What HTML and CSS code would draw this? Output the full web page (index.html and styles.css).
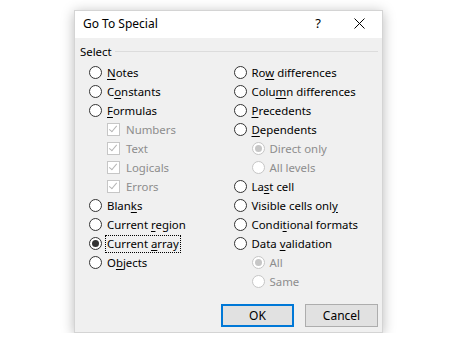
FILE: index.html
```html
<!DOCTYPE html>
<html lang="en">

<head>
  <meta charset="UTF-8">
  <title>Go To Special</title>
  <link rel="stylesheet" href="styles.css">
</head>

<body>
  <main>
    <section class="dialog">
      <header class="titlebar">
        <span class="title">Go To Special</span>
        <span class="help">?</span>
        <span class="close">
          <svg width="11" height="11" viewBox="0 0 11 11">
            <path d="M0.5 0.5 L10.5 10.5 M10.5 0.5 L0.5 10.5" stroke="#000" stroke-width="1" fill="none" />
          </svg>
        </span>
      </header>

      <div class="content">
        <div class="group-label"><span>Select</span></div>

        <div class="columns">
          <div class="column">
            <div class="row"><span class="radio"></span><span class="label"><u>N</u>otes</span></div>
            <div class="row"><span class="radio"></span><span class="label">C<u>o</u>nstants</span></div>
            <div class="row"><span class="radio"></span><span class="label"><u>F</u>ormulas</span></div>
            <div class="row sub disabled"><span class="check"></span><span class="label">Numbers</span></div>
            <div class="row sub disabled"><span class="check"></span><span class="label">Text</span></div>
            <div class="row sub disabled"><span class="check"></span><span class="label">Logicals</span></div>
            <div class="row sub disabled"><span class="check"></span><span class="label">Errors</span></div>
            <div class="row"><span class="radio"></span><span class="label">Blan<u>k</u>s</span></div>
            <div class="row"><span class="radio"></span><span class="label">Current <u>r</u>egion</span></div>
            <div class="row"><span class="radio checked"></span><span class="label focused">Current <u>a</u>rray</span></div>
            <div class="row"><span class="radio"></span><span class="label">O<u>b</u>jects</span></div>
          </div>

          <div class="column">
            <div class="row"><span class="radio"></span><span class="label">Ro<u>w</u> differences</span></div>
            <div class="row"><span class="radio"></span><span class="label">Colu<u>m</u>n differences</span></div>
            <div class="row"><span class="radio"></span><span class="label"><u>P</u>recedents</span></div>
            <div class="row"><span class="radio"></span><span class="label"><u>D</u>ependents</span></div>
            <div class="row sub disabled"><span class="radio checked"></span><span class="label">Direct only</span></div>
            <div class="row sub disabled"><span class="radio"></span><span class="label">All levels</span></div>
            <div class="row"><span class="radio"></span><span class="label">La<u>s</u>t cell</span></div>
            <div class="row"><span class="radio"></span><span class="label">Visible cells onl<u>y</u></span></div>
            <div class="row"><span class="radio"></span><span class="label">Condi<u>t</u>ional formats</span></div>
            <div class="row"><span class="radio"></span><span class="label">Data <u>v</u>alidation</span></div>
            <div class="row sub disabled"><span class="radio checked"></span><span class="label">All</span></div>
            <div class="row sub disabled"><span class="radio"></span><span class="label">Same</span></div>
          </div>
        </div>

        <footer class="buttons">
          <button class="btn default">OK</button>
          <button class="btn">Cancel</button>
        </footer>
      </div>
    </section>
  </main>
</body>

</html>
```

FILE: styles.css
```css
*,
*::before,
*::after {
  box-sizing: border-box;
  margin: 0;
  padding: 0;
}

:root {
  --dialog-bg: #f0f0f0;
  --text: #000;
  --text-disabled: #8d8d8d;
  --border-disabled: #c6c6c6;
  --accent: #0078d7;

  --ff-ui: "Noto Sans", "Open Sans", sans-serif;
}

body {
  background: #fff;
  font-family: var(--ff-ui);
  font-size: 11.4px;
  color: var(--text);
}

main {
  padding: 10px 0 0 74px;
}

.dialog {
  display: flex;
  flex-direction: column;

  width: 309px;
  height: 323px;

  background: var(--dialog-bg);
  border: 1px solid #d4d4d4;
  box-shadow: 0 2px 12px rgba(0, 0, 0, 0.28);
}

.titlebar {
  display: flex;
  align-items: center;

  height: 27px;
  padding-left: 8px;
  padding-bottom: 3px;

  background: #fff;
}

.title {
  flex: 1;
  font-size: 12px;
}

.help {
  width: 46px;
  text-align: center;
  font-size: 13px;
  margin-right: -4px;
}

.close {
  display: flex;
  align-items: center;
  justify-content: center;
  width: 45px;
}

.content {
  position: relative;
  flex: 1;
  padding: 5px 4px 0 5px;
}

.group-label {
  display: flex;
  align-items: center;
  gap: 3px;
  height: 17px;
}

.group-label::after {
  content: "";
  flex: 1;
  height: 1px;
  background: #dcdcdc;
}

.columns {
  display: flex;
  margin-top: 3px;
  padding-left: 9px;
}

.column {
  width: 150px;
}

.row {
  display: flex;
  align-items: center;
  height: 19px;
  white-space: nowrap;
}

.row.sub {
  padding-left: 18px;
}

.disabled .label {
  color: var(--text-disabled);
}

.label {
  padding: 0 1px;
  margin-left: 3px;
  line-height: 16px;
  border: 1px dotted transparent;
}

.label.focused {
  border-color: #000;
}

.label u {
  text-underline-offset: 2px;
}

.radio {
  position: relative;
  flex: none;

  width: 13px;
  height: 13px;

  border: 1px solid #333;
  border-radius: 50%;
  background: #fff;
}

.radio.checked::after {
  content: "";
  position: absolute;
  inset: 2px;
  border-radius: 50%;
  background: #333;
}

.disabled .radio {
  border-color: var(--border-disabled);
}

.disabled .radio.checked::after {
  background: #c6c6c6;
}

.check {
  position: relative;
  flex: none;

  width: 13px;
  height: 13px;
  margin-right: 1px;

  border: 1px solid var(--border-disabled);
  background: #fff;
}

.check::after {
  content: "";
  position: absolute;
  left: 3px;
  top: 0px;

  width: 4px;
  height: 8px;

  border-right: 1px solid #b5b5b5;
  border-bottom: 1px solid #b5b5b5;
  transform: rotate(40deg);
}

.buttons {
  position: absolute;
  right: 4px;
  bottom: 5px;

  display: flex;
  gap: 11px;
}

.btn {
  width: 73px;
  height: 23px;

  border: 1px solid #adadad;
  background: #e1e1e1;

  font-family: var(--ff-ui);
  font-size: 12px;
  color: var(--text);
}

.btn.default {
  border: 2px solid var(--accent);
}
```
